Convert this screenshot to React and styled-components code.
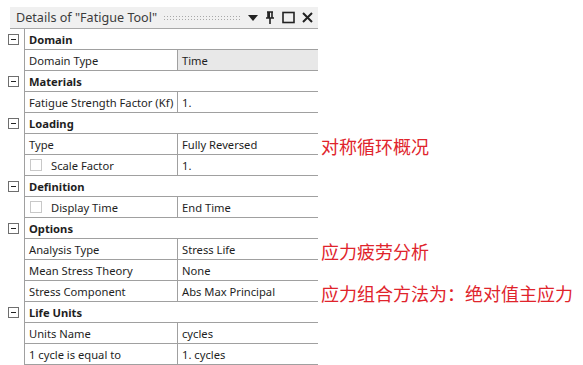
import React from "react";
import styled, { createGlobalStyle } from "styled-components";

const GlobalStyle = createGlobalStyle`
  body {
    margin: 0;
    background: #ffffff;
    font-family: "Noto Sans", "Open Sans", sans-serif;
  }
`;

const Page = styled.div`
  padding-top: 7px;
  width: 583px;
`;

const TitleBar = styled.div`
  margin-left: 10px;
  width: 308px;
  height: 22px;
  background: #f0f0f0;
  border-bottom: 1px solid #a8a8a8;
  display: flex;
  align-items: center;
  padding-left: 6px;
  box-sizing: border-box;
  padding-right: 5px;
`;

const Title = styled.span`
  font-size: 12.6px;
  color: #3c3c3c;
  white-space: nowrap;
`;

const Dots = styled.div`
  flex: 1;
  height: 6px;
  margin: 0 8px 0 6px;
  background-image: radial-gradient(circle at 1.5px 1.5px, #a8a8a8 0.7px, transparent 0.9px);
  background-size: 3px 3px;
`;

const Tools = styled.div`
  display: flex;
  align-items: center;
  gap: 7px;
`;

const Row = styled.div`
  display: grid;
  grid-template-columns: 25px 153px 140px auto;
  height: 21px;
`;

const Gutter = styled.div`
  display: flex;
  align-items: center;
  justify-content: center;
  padding-left: 2px;
  border-right: 1px solid #a0a0a0;
  box-sizing: border-box;
`;

const MinusBox = styled.div`
  width: 9px;
  height: 9px;
  border: 1px solid #6e6e6e;
  background: #fff;
  display: flex;
  align-items: center;
  justify-content: center;
  &::after {
    content: "";
    width: 5px;
    height: 1px;
    background: #222;
  }
`;

const Cell = styled.div`
  grid-column: ${(p) => (p.$span ? "2 / span 2" : "auto")};
  display: flex;
  align-items: center;
  gap: 9px;
  padding-left: ${(p) => (p.$check ? "5px" : "4px")};
  border-bottom: 1px solid #a0a0a0;
  border-right: ${(p) => (p.$name ? "1px solid #a0a0a0" : "none")};
  background: ${(p) => (p.$selected ? "#e8e8e8" : "transparent")};
  font-size: 11.2px;
  font-weight: ${(p) => (p.$bold ? 700 : 400)};
  color: #1e1e1e;
  white-space: nowrap;
  overflow: hidden;
  box-sizing: border-box;
`;

const Check = styled.span`
  width: 10px;
  height: 10px;
  border: 1px solid #c8c8c8;
  background: #fff;
`;

const Note = styled.div`
  padding: 3px 0 0 3px;
  font-family: "Noto Sans CJK SC", sans-serif;
  font-size: 18px;
  line-height: 18px;
  color: #e0242c;
  white-space: nowrap;
`;

const sections = [
  { title: "Domain", rows: [{ name: "Domain Type", value: "Time", selected: true }] },
  { title: "Materials", rows: [{ name: "Fatigue Strength Factor (Kf)", value: "1." }] },
  {
    title: "Loading",
    rows: [
      { name: "Type", value: "Fully Reversed", note: "对称循环概况" },
      { name: "Scale Factor", value: "1.", check: true },
    ],
  },
  { title: "Definition", rows: [{ name: "Display Time", value: "End Time", check: true }] },
  {
    title: "Options",
    rows: [
      { name: "Analysis Type", value: "Stress Life", note: "应力疲劳分析" },
      { name: "Mean Stress Theory", value: "None" },
      { name: "Stress Component", value: "Abs Max Principal", note: "应力组合方法为：绝对值主应力" },
    ],
  },
  {
    title: "Life Units",
    rows: [
      { name: "Units Name", value: "cycles" },
      { name: "1 cycle is equal to", value: "1. cycles" },
    ],
  },
];

const PinIcon = () => (
  <svg width="10" height="13" viewBox="0 0 10 13">
    <path d="M2 1h6M3 1v6M7 1v6M1 7h8M5 7v6" stroke="#222" strokeWidth="1.6" fill="none" />
    <rect x="3" y="1" width="2" height="6" fill="#222" />
  </svg>
);

const App = () => {
  return (
    <Page>
      <GlobalStyle />
      <TitleBar>
        <Title>Details of "Fatigue Tool"</Title>
        <Dots />
        <Tools>
          <svg width="10" height="6" viewBox="0 0 10 6">
            <path d="M0 0h10L5 6z" fill="#222" />
          </svg>
          <PinIcon />
          <svg width="13" height="13" viewBox="0 0 13 13">
            <rect x="1" y="1.5" width="11" height="10" stroke="#222" strokeWidth="1.6" fill="none" />
          </svg>
          <svg width="11" height="11" viewBox="0 0 11 11">
            <path d="M1 1l9 9M10 1l-9 9" stroke="#222" strokeWidth="2" />
          </svg>
        </Tools>
      </TitleBar>
      {sections.map((s) => (
        <React.Fragment key={s.title}>
          <Row>
            <Gutter>
              <MinusBox />
            </Gutter>
            <Cell $span $bold>
              {s.title}
            </Cell>
          </Row>
          {s.rows.map((r) => (
            <Row key={r.name}>
              <Gutter />
              <Cell $name $check={r.check}>
                {r.check && <Check />}
                {r.name}
              </Cell>
              <Cell $selected={r.selected}>{r.value}</Cell>
              {r.note && <Note>{r.note}</Note>}
            </Row>
          ))}
        </React.Fragment>
      ))}
    </Page>
  );
};

export default App;
